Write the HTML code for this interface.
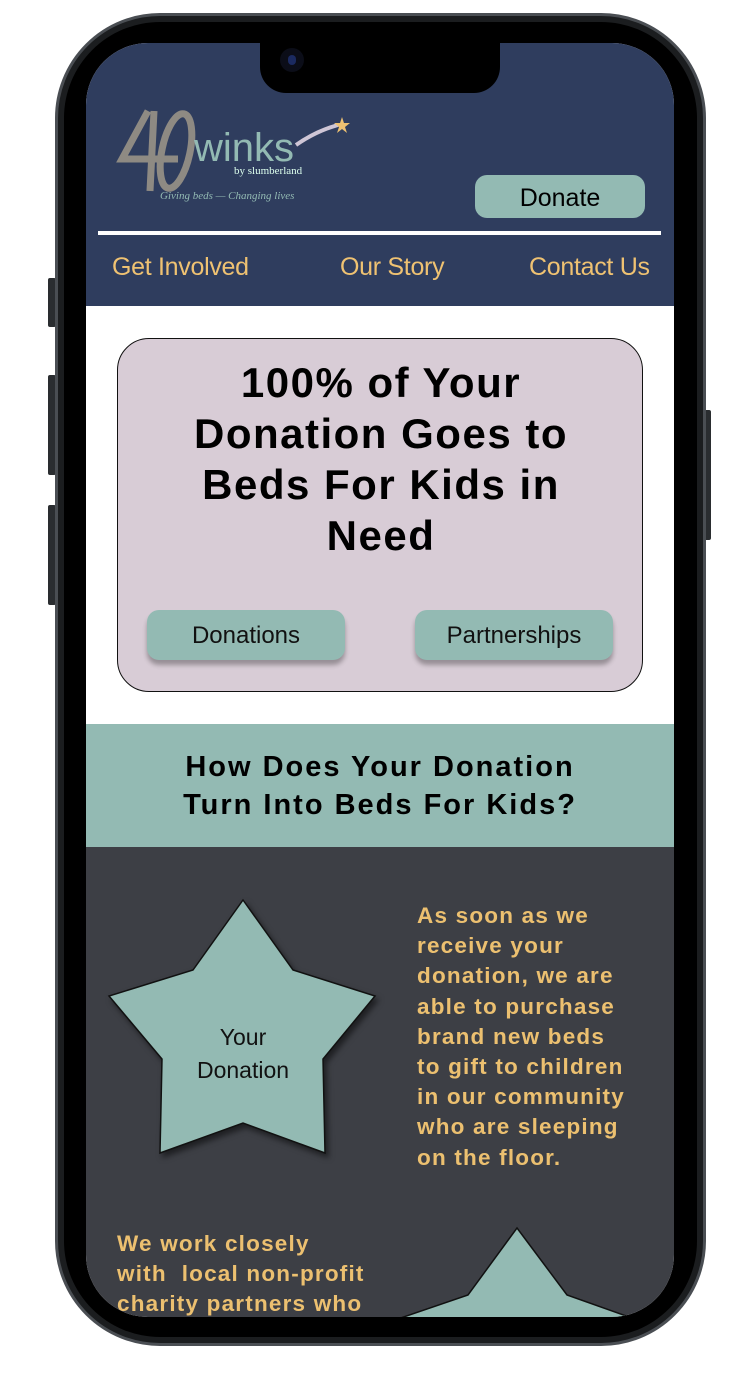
<!DOCTYPE html>
<html><head><meta charset="utf-8"><style>
*{margin:0;padding:0;box-sizing:border-box}
body{width:746px;height:1374px;background:#fff;position:relative;overflow:hidden;font-family:"Liberation Sans",sans-serif}
.abs{position:absolute}
.frame{left:55px;top:13px;width:651px;height:1333px;border-radius:105px;background:#1b1d1f;border:3px solid #4a4e53}
.bezel{left:64px;top:22px;width:633px;height:1315px;border-radius:96px;background:#000}
.screen{left:86px;top:43px;width:588px;height:1274px;border-radius:62px;overflow:hidden;background:#fff}
.hdr{left:0;top:0;width:588px;height:263px;background:#2f3d5e}
.notch{left:174px;top:0;width:240px;height:50px;background:#000;border-radius:0 0 26px 26px}
.nav{top:210px;font-size:25px;color:#efc272;letter-spacing:-0.3px}
.card{left:31px;top:295px;width:526px;height:354px;background:#d8ccd6;border:1.5px solid #111;border-radius:32px}
.h1{left:0;top:18px;width:526px;text-align:center;font-weight:bold;font-size:42px;line-height:51px;color:#000;letter-spacing:1.5px}
.btn{top:271px;width:198px;height:50px;background:#93bab3;border-radius:12px;box-shadow:0 5px 5px rgba(0,0,0,.3);font-size:24px;text-align:center;line-height:52px;color:#111}
.band{left:0;top:681px;width:588px;height:123px;background:#93bab3;text-align:center;font-weight:bold;font-size:29px;line-height:38px;padding-top:24px;letter-spacing:2px}
.dark{left:0;top:804px;width:588px;height:470px;background:#3d3f45}
.yt{color:#ecc070;font-weight:bold;font-size:22.5px;line-height:30.2px;letter-spacing:1.2px}
</style></head><body>
<div class="abs" style="left:48px;top:278px;width:8px;height:49px;background:#2a2d30;border-radius:2px"></div>
<div class="abs" style="left:48px;top:375px;width:8px;height:100px;background:#2a2d30;border-radius:2px"></div>
<div class="abs" style="left:48px;top:505px;width:8px;height:100px;background:#2a2d30;border-radius:2px"></div>
<div class="abs" style="left:704px;top:410px;width:7px;height:130px;background:#2a2d30;border-radius:2px"></div>
<div class="abs frame"></div>
<div class="abs bezel"></div>
<div class="abs screen">
  <div class="abs hdr">
    <div class="abs notch"></div>
    <div class="abs" style="left:194px;top:5px;width:24px;height:24px;border-radius:50%;background:#0b0d18"></div>
    <div class="abs" style="left:202px;top:12px;width:8px;height:10px;border-radius:4px;background:#1b2a60"></div>
    <svg class="abs" style="left:30px;top:60px" width="240" height="110" viewBox="0 0 240 110">
      <path d="M32 8 L6 56 L62 56 M38 8 L34 88" stroke="#8e8a83" stroke-width="7" fill="none"/>
      <ellipse cx="60" cy="48" rx="14" ry="38" fill="none" stroke="#8e8a83" stroke-width="7" transform="rotate(12 60 48)"/>
      <text x="78" y="58" font-family="Liberation Sans,sans-serif" font-size="40" fill="#93bab3">winks</text>
      <text x="118" y="71" font-family="Liberation Serif,serif" font-size="11" fill="#dfe">by slumberland</text>
      <text x="44" y="96" font-family="Liberation Serif,serif" font-style="italic" font-size="11" fill="#93bab3">Giving beds — Changing lives</text>
      <path d="M180 42 Q200 28 222 22" stroke="#cfc6d6" stroke-width="4" fill="none"/>
      <polygon points="226,14 228,20 234,20 229,24 231,30 226,26 221,30 223,24 218,20 224,20" fill="#efc272"/>
    </svg>
    <div class="abs" style="left:389px;top:132px;width:170px;height:43px;background:#93bab3;border-radius:12px;text-align:center;font-size:25px;line-height:46px;color:#000">Donate</div>
    <div class="abs" style="left:12px;top:188px;width:563px;height:4px;background:#fff"></div>
    <div class="abs nav" style="left:26px">Get Involved</div>
    <div class="abs nav" style="left:254px">Our Story</div>
    <div class="abs nav" style="left:443px">Contact Us</div>
  </div>
  <div class="abs card">
    <div class="abs h1">100% of Your<br>Donation Goes to<br>Beds For Kids in<br>Need</div>
    <div class="abs btn" style="left:29px">Donations</div>
    <div class="abs btn" style="left:297px">Partnerships</div>
  </div>
  <div class="abs band">How Does Your Donation<br>Turn Into Beds For Kids?</div>
  <div class="abs dark"></div>
  <svg class="abs" style="left:0;top:0" width="588" height="1274">
    <polygon points="157,857 207,927 289,953 237,1016 239,1110 157,1080 74,1110 76,1016 23,953 107,927" fill="#93bab3" stroke="#111" stroke-width="1.5" style="filter:drop-shadow(3px 4px 3px rgba(0,0,0,.5))"/>
    <polygon points="431,1185 481,1252 560,1280 560,1300 300,1300 300,1280 382,1252" fill="#93bab3" stroke="#111" stroke-width="1.5"/>
    <text x="157" y="1002" text-anchor="middle" font-family="Liberation Sans,sans-serif" font-size="23" fill="#111">Your</text>
    <text x="157" y="1035" text-anchor="middle" font-family="Liberation Sans,sans-serif" font-size="23" fill="#111">Donation</text>
  </svg>
  <div class="abs yt" style="left:331px;top:858px">As soon as we<br>receive your<br>donation, we are<br>able to purchase<br>brand new beds<br>to gift to children<br>in our community<br>who are sleeping<br>on the floor.</div>
  <div class="abs yt" style="left:31px;top:1186px">We work closely<br>with &nbsp;local non-profit<br>charity partners who</div>
</div>
</body></html>
